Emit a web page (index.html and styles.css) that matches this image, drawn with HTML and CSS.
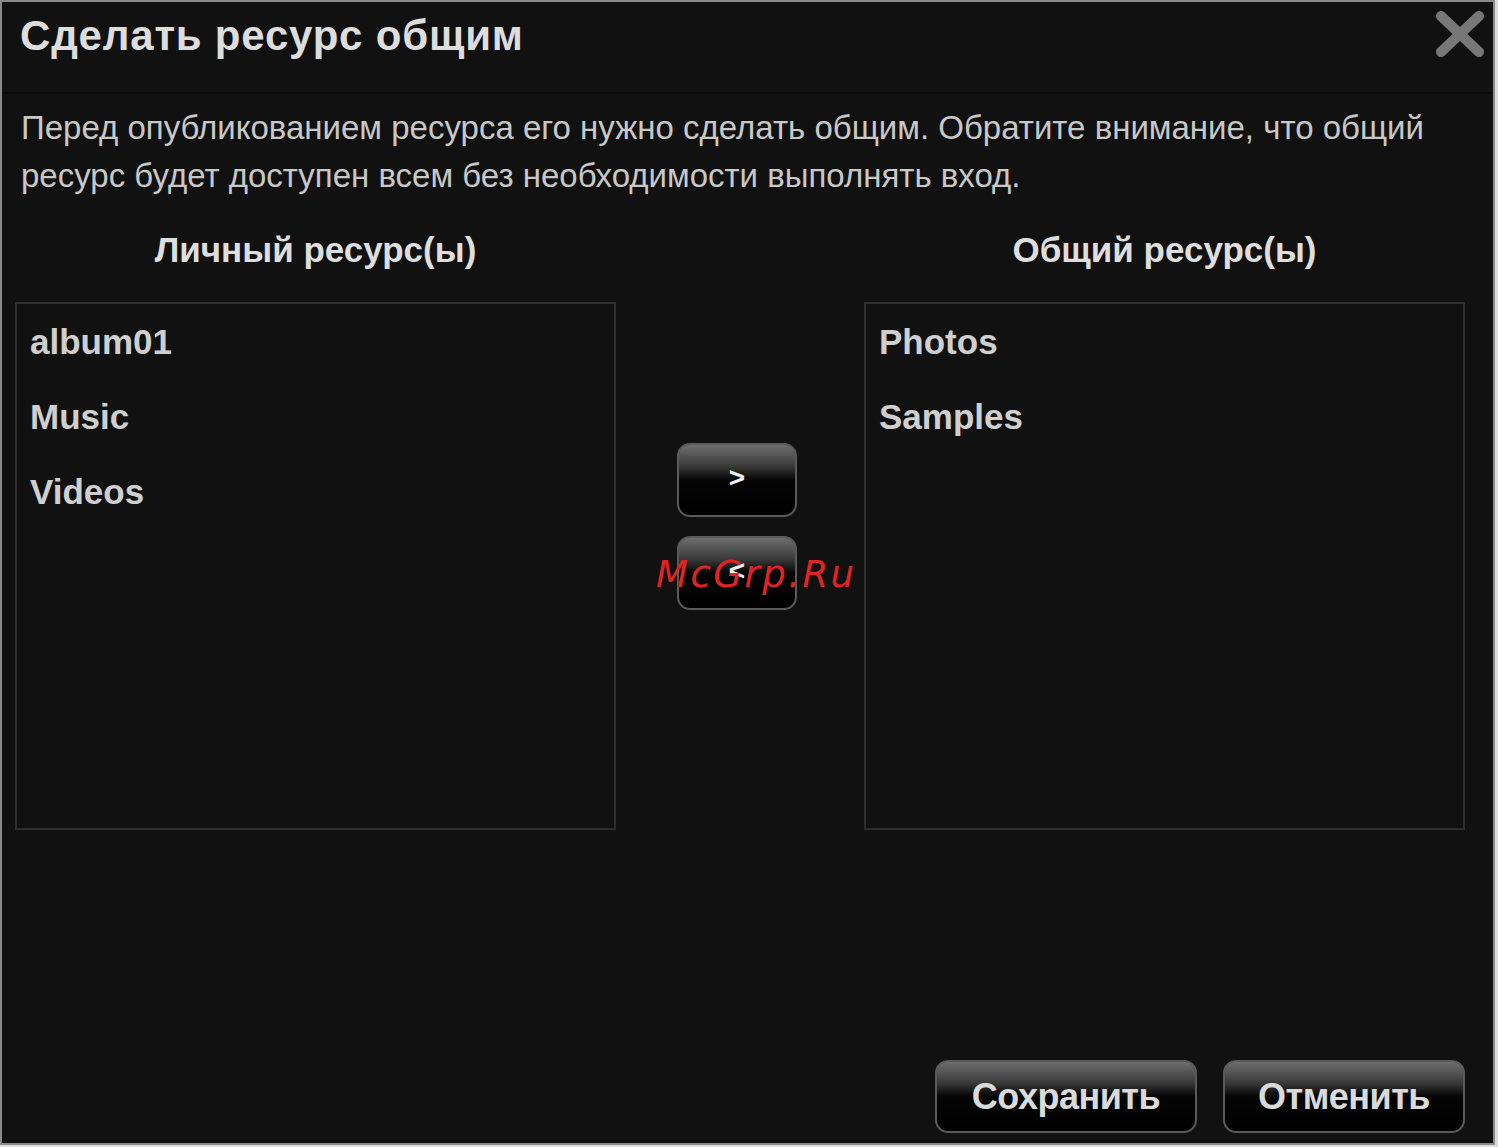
FILE: index.html
```html
<!DOCTYPE html>
<html lang="ru">
<head>
<meta charset="utf-8">
<title>Сделать ресурс общим</title>
<link rel="stylesheet" href="styles.css">
</head>
<body>
<div class="dialog">
  <div class="header">
    <h1 class="title">Сделать ресурс общим</h1>
    <button class="close" aria-label="Закрыть">
      <svg width="50" height="48" viewBox="0 0 50 48"><path d="M6 6 L44 42 M44 6 L6 42" stroke="#777" stroke-width="10" stroke-linecap="round" fill="none"/></svg>
    </button>
  </div>
  <div class="body">
    <p class="desc">Перед опубликованием ресурса его нужно сделать общим. Обратите внимание, что общий ресурс будет доступен всем без необходимости выполнять вход.</p>
    <div class="columns">
      <div class="col">
        <h2 class="col-title">Личный ресурс(ы)</h2>
        <ul class="list">
          <li>album01</li>
          <li>Music</li>
          <li>Videos</li>
        </ul>
      </div>
      <div class="mid">
        <button class="move">&gt;</button>
        <button class="move">&lt;</button>
      </div>
      <div class="col">
        <h2 class="col-title">Общий ресурс(ы)</h2>
        <ul class="list list-right">
          <li>Photos</li>
          <li>Samples</li>
        </ul>
      </div>
    </div>
    <div class="footer">
      <button class="btn btn-save">Сохранить</button>
      <button class="btn btn-cancel">Отменить</button>
    </div>
  </div>
  <div class="watermark">McGrp.Ru</div>
</div>
</body>
</html>
```
FILE: styles.css
```css
* { box-sizing: border-box; }
html, body { margin: 0; padding: 0; }
body {
  background: #dcdcdc;
  width: 1498px;
  height: 1147px;
  overflow: hidden;
}
.dialog {
  position: relative;
  width: 1495px;
  height: 1145px;
  background: #111111;
  border: 2px solid #8a8a8a;
  display: flex;
  flex-direction: column;
  font-family: "Liberation Sans", Arial, sans-serif;
  color: #d0d0d0;
}
.header {
  height: 92px;
  flex: none;
  display: flex;
  justify-content: space-between;
  align-items: flex-start;
  border-bottom: 2px solid #0c0c0c;
  padding: 0 8px 0 18px;
}
.title {
  margin: 11px 0 0;
  font-size: 42px;
  font-weight: bold;
  color: #dddddd;
  line-height: 46px;
  letter-spacing: 0.8px;
}
.close {
  margin-top: 8px;
  background: none;
  border: 0;
  padding: 0;
  width: 50px;
  height: 48px;
}
.close svg { display: block; }
.body {
  flex: 1;
  display: flex;
  flex-direction: column;
  padding: 10px 26px 9px 13px;
}
.desc {
  margin: 0 0 0 6px;
  font-size: 33px;
  line-height: 48px;
  color: #c8c8c8;
}
.columns {
  display: flex;
  margin-top: 26px;
}
.col {
  width: 601px;
  display: flex;
  flex-direction: column;
}
.col-title {
  margin: 0 0 28px;
  text-align: center;
  font-size: 35px;
  font-weight: bold;
  line-height: 48px;
  color: #dedede;
}
.list {
  list-style: none;
  margin: 0;
  padding: 0 0 0 13px;
  height: 528px;
  border: 2px solid #2e2e2e;
  font-size: 35px;
  font-weight: bold;
  line-height: 75px;
  color: #cfcfcf;
}
.mid {
  width: 248px;
  display: flex;
  flex-direction: column;
  align-items: center;
  padding-top: 217px;
  padding-right: 6px;
  gap: 19px;
}
.move {
  width: 120px;
  height: 74px;
  border-radius: 13px;
  border: 2px solid #5a5a5a;
  background: linear-gradient(#6e6e6e 0%, #3a3a3a 30%, #050505 50%, #000 100%);
  color: #f2f2f2;
  font-family: "Liberation Sans", Arial, sans-serif;
  font-size: 28px;
  font-weight: bold;
  padding: 0 0 4px;
}
.footer {
  margin-top: auto;
  display: flex;
  justify-content: flex-end;
  gap: 26px;
  padding-right: 2px;
  padding-bottom: 1px;
}
.btn {
  height: 73px;
  border-radius: 13px;
  border: 2px solid #5a5a5a;
  background: linear-gradient(#6e6e6e 0%, #3a3a3a 30%, #050505 50%, #000 100%);
  color: #dadada;
  font-family: "Liberation Sans", Arial, sans-serif;
  font-size: 36px;
  letter-spacing: -0.5px;
  font-weight: bold;
  padding: 0;
}
.btn-save { width: 262px; }
.btn-cancel { width: 242px; }
.watermark {
  position: absolute;
  left: 654px;
  top: 551px;
  font-family: "DejaVu Sans", sans-serif;
  font-style: italic;
  font-size: 37px;
  letter-spacing: 2.5px;
  color: #e02424;
}
```
